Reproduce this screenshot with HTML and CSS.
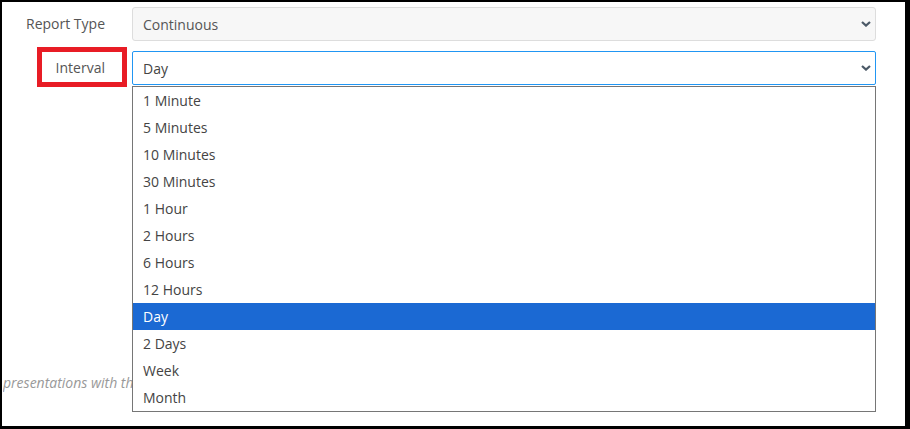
FILE: index.html
```html
<!DOCTYPE html>
<html lang="en">
<head>
    <meta charset="UTF-8">
    <meta name="viewport" content="width=device-width, initial-scale=1.0">
    <title>Report Settings</title>
    <link rel="stylesheet" href="styles.css">
</head>
<body>
    <div class="frame">
        <div class="form">
            <!-- Report type (read only) -->
            <div class="row">
                <div class="label-col"><label class="label">Report Type</label></div>
                <div class="select select-readonly">
                    <span>Continuous</span>
                    <svg class="chevron" width="10" height="6" viewBox="0 0 10 6"><path d="M1 1 L5 4.6 L9 1" fill="none" stroke="#4b5967" stroke-width="2.2"/></svg>
                </div>
            </div>

            <!-- Interval, open dropdown -->
            <div class="row">
                <div class="label-col"><label class="label label-marked">Interval</label></div>
                <div class="select-wrap">
                    <div class="select select-open">
                        <span>Day</span>
                        <svg class="chevron" width="10" height="6" viewBox="0 0 10 6"><path d="M1 1 L5 4.6 L9 1" fill="none" stroke="#4b5967" stroke-width="2.2"/></svg>
                    </div>
                    <ul class="dropdown">
                        <li>1 Minute</li>
                        <li>5 Minutes</li>
                        <li>10 Minutes</li>
                        <li>30 Minutes</li>
                        <li>1 Hour</li>
                        <li>2 Hours</li>
                        <li>6 Hours</li>
                        <li>12 Hours</li>
                        <li class="selected">Day</li>
                        <li>2 Days</li>
                        <li>Week</li>
                        <li>Month</li>
                    </ul>
                </div>
            </div>

            <p class="note">presentations with the data from the selected interval.</p>
        </div>
    </div>
</body>
</html>
```

FILE: styles.css
```css
body { margin: 0; font-family: "Open Sans", Arial, sans-serif; font-size: 14px; background: #fff; }
.frame { width: 910px; height: 429px; box-sizing: border-box; border-style: solid; border-color: #000; border-width: 2px 5px 3px 2px; overflow: hidden; }
.form { padding: 5px 29px 0 0; }
.row { display: flex; height: 34px; align-items: center; margin-bottom: 10px; }
.label-col { width: 130px; flex: none; display: flex; justify-content: flex-end; padding-right: 5px; box-sizing: border-box; }
.label { display: flex; align-items: center; height: 40px; box-sizing: border-box; padding: 0 17px 0 14px; border: 5px solid transparent; color: #555; margin-bottom: 2px; }
.label-marked { border-color: #e81c25; }
.select-wrap { flex: 1; position: relative; height: 34px; }
.select { flex: 1; height: 34px; box-sizing: border-box; display: flex; align-items: center; justify-content: space-between; padding: 0 4px 0 10px; border: 1px solid #ddd; border-radius: 3px; color: #555; }
.select-readonly { background: #f7f7f7; }
.select-open { border-color: #2196f3; border-radius: 2px; background: #fff; color: #444; }
.chevron { display: block; }
.dropdown { position: absolute; left: 0; right: 0; top: 35px; margin: 0; padding: 0; list-style: none; background: #fff; border: 1px solid #767676; z-index: 2; }
.dropdown li { height: 27px; line-height: 27px; padding-left: 10px; color: #444; }
.dropdown li.selected { background: #1b69d3; color: #fff; }
.note { width: 129px; overflow: hidden; margin: 288px 0 0 1px; line-height: 20px; font-style: italic; color: #999; white-space: nowrap; }
```
